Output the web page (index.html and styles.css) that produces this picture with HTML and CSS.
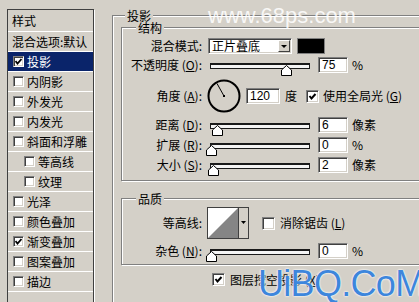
FILE: index.html
```html
<!DOCTYPE html>
<html lang="zh-CN">
<head>
  <meta charset="UTF-8">
  <title>图层样式 - 投影</title>
  <link rel="stylesheet" href="styles.css">
</head>
<body>
  <div class="window">
    <!-- 左侧样式列表 -->
    <div class="styles">
      <div class="styles-head">样式</div>
      <ul class="style-list">
        <li class="plain">混合选项:默认</li>
        <li class="active"><span class="box on"><svg width="7" height="7" viewBox="0 0 7 7"><polyline points="0.5,3 2.5,5.5 6.5,1" /></svg></span>投影</li>
        <li><span class="box"></span>内阴影</li>
        <li><span class="box"></span>外发光</li>
        <li><span class="box"></span>内发光</li>
        <li><span class="box"></span>斜面和浮雕</li>
        <li class="sub"><span class="box"></span>等高线</li>
        <li class="sub"><span class="box"></span>纹理</li>
        <li><span class="box"></span>光泽</li>
        <li><span class="box"></span>颜色叠加</li>
        <li><span class="box on"><svg width="7" height="7" viewBox="0 0 7 7"><polyline points="0.5,3 2.5,5.5 6.5,1" /></svg></span>渐变叠加</li>
        <li><span class="box"></span>图案叠加</li>
        <li><span class="box"></span>描边</li>
      </ul>
    </div>

    <!-- 投影设置 -->
    <fieldset class="group outer">
      <legend>投影</legend>

      <fieldset class="group inner">
        <legend>结构</legend>

        <div class="row r-blend">
          <span class="label">混合模式:</span>
          <div class="select"><span>正片叠底</span><i class="drop"></i></div>
          <span class="swatch"></span>
        </div>

        <div class="row r-opacity">
          <span class="label">不透明度 (<u>O</u>):</span>
          <div class="slider">
            <div class="track"></div>
            <svg class="thumb" style="left: 71px" width="11" height="11" viewBox="0 0 11 11"><polygon points="0.5,10.5 0.5,5 5.5,0.5 10.5,5 10.5,10.5" /></svg>
          </div>
          <span class="num">75</span>
          <span class="unit">%</span>
        </div>

        <div class="row r-angle">
          <span class="label">角度 (<u>A</u>):</span>
          <svg class="dial" width="34" height="34" viewBox="0 0 34 34">
            <circle cx="17" cy="17" r="15.5" />
            <line x1="17" y1="17" x2="10" y2="4.5" />
            <rect x="16" y="16" width="2" height="2" />
          </svg>
          <span class="num wide">120</span>
          <span class="unit u-deg">度</span>
          <span class="box lg on"><svg width="9" height="9" viewBox="0 0 9 9"><polyline points="1.5,4 3.5,6.5 7.5,2" /></svg></span>
          <span class="opt">使用全局光 (<u>G</u>)</span>
        </div>

        <div class="row">
          <span class="label">距离 (<u>D</u>):</span>
          <div class="slider">
            <div class="track"></div>
            <svg class="thumb" style="left: 2px" width="11" height="11" viewBox="0 0 11 11"><polygon points="0.5,10.5 0.5,5 5.5,0.5 10.5,5 10.5,10.5" /></svg>
          </div>
          <span class="num">6</span>
          <span class="unit">像素</span>
        </div>

        <div class="row">
          <span class="label">扩展 (<u>R</u>):</span>
          <div class="slider">
            <div class="track"></div>
            <svg class="thumb" style="left: -4px" width="11" height="11" viewBox="0 0 11 11"><polygon points="0.5,10.5 0.5,5 5.5,0.5 10.5,5 10.5,10.5" /></svg>
          </div>
          <span class="num">0</span>
          <span class="unit">%</span>
        </div>

        <div class="row">
          <span class="label">大小 (<u>S</u>):</span>
          <div class="slider">
            <div class="track"></div>
            <svg class="thumb" style="left: -2px" width="11" height="11" viewBox="0 0 11 11"><polygon points="0.5,10.5 0.5,5 5.5,0.5 10.5,5 10.5,10.5" /></svg>
          </div>
          <span class="num">2</span>
          <span class="unit">像素</span>
        </div>
      </fieldset>

      <fieldset class="group quality">
        <legend>品质</legend>

        <div class="row r-contour">
          <span class="label">等高线:</span>
          <svg class="contour" width="42" height="32" viewBox="0 0 42 32">
            <rect x="0" y="0" width="42" height="32" fill="#d4d0c8" />
            <rect x="1" y="1" width="30" height="30" fill="#fff" />
            <polygon points="1,31 31,1 31,31" fill="#858585" />
            <rect x="0.5" y="0.5" width="41" height="31" fill="none" stroke="#404040" />
            <line x1="31.5" y1="1" x2="31.5" y2="31" stroke="#404040" />
            <polygon points="34,14 39,14 36.5,17" fill="#000" />
          </svg>
          <span class="box lg"></span>
          <span class="opt">消除锯齿 (<u>L</u>)</span>
        </div>

        <div class="row">
          <span class="label">杂色 (<u>N</u>):</span>
          <div class="slider">
            <div class="track"></div>
            <svg class="thumb" style="left: -4px" width="11" height="11" viewBox="0 0 11 11"><polygon points="0.5,10.5 0.5,5 5.5,0.5 10.5,5 10.5,10.5" /></svg>
          </div>
          <span class="num">0</span>
          <span class="unit">%</span>
        </div>
      </fieldset>

      <div class="knockout">
        <span class="box lg on"><svg width="9" height="9" viewBox="0 0 9 9"><polyline points="1.5,4 3.5,6.5 7.5,2" /></svg></span>
        <span class="opt">图层挖空投影 (<u>X</u>)</span>
      </div>
    </fieldset>

    <!-- 水印 -->
    <div class="mark mark-top">www.68ps.com</div>
    <div class="mark mark-bottom">UiBQ.CoM</div>
  </div>
</body>
</html>
```

FILE: styles.css
```css
body {
  margin: 0;
  background: #d4d0c8;
  font-family: "Noto Sans CJK SC", "Liberation Sans", sans-serif;
  font-size: 12px;
  color: #000;
  overflow: hidden;
}
.window {
  position: relative;
  display: flex;
  align-items: flex-start;
  width: 419px;
  height: 302px;
  overflow: hidden;
}

/* 样式列表 */
.styles {
  flex: none;
  margin: 9px 0 0 7px;
  width: 85px;
  height: 310px;
  border: 1px solid #404040;
  box-shadow: 1px 1px 0 #fff;
}
.styles-head {
  height: 21px;
  line-height: 21px;
  padding-left: 4px;
  border-bottom: 1px solid #fff;
}
.style-list {
  list-style: none;
  margin: 0;
  padding: 0;
}
.style-list li {
  display: flex;
  align-items: center;
  height: 19px;
  padding-left: 5px;
  border-bottom: 1px solid #fff;
  white-space: nowrap;
}
.style-list li.plain {
  padding-left: 4px;
}
.style-list li.sub {
  padding-left: 16px;
}
.style-list li.active {
  background: #0a246a;
  color: #fff;
}

/* 复选框 */
.box {
  flex: none;
  display: inline-flex;
  align-items: center;
  justify-content: center;
  box-sizing: border-box;
  width: 11px;
  height: 11px;
  margin-right: 3px;
  background: #fff;
  border: 1px solid;
  border-color: #808080 #fff #fff #808080;
  box-shadow: inset 1px 1px 0 #404040, inset -1px -1px 0 #d4d0c8;
}
.box.lg {
  width: 13px;
  height: 13px;
  margin-right: 0;
}
.box svg {
  fill: none;
  stroke: #000;
  stroke-width: 1.8;
}
.box.lg svg {
  stroke-width: 2;
}

/* 分组框 */
.group {
  margin: 0;
  padding: 0;
  min-width: 0;
  border: 1px solid #808080;
  box-shadow: inset 1px 1px 0 #fff, 1px 1px 0 #fff;
}
.group legend {
  padding: 0 2px;
  line-height: 15px;
  background: #d4d0c8;
}
.outer {
  flex: none;
  margin: 8px 0 0 18px;
  padding-left: 8px;
  width: 332px;
  height: 310px;
}
.outer > legend {
  margin-left: 4px;
}
.inner {
  margin: -3px 8px 0 0;
  padding: 3px 0 7px;
}
.inner > legend,
.quality > legend {
  margin-left: 14px;
}
.quality {
  margin: 10px 8px 0 0;
  padding: 1px 0 5px;
}

/* 行 */
.row {
  display: flex;
  align-items: center;
  height: 16px;
  margin-top: 4px;
  white-space: nowrap;
}
.row.r-blend {
  margin-top: 0;
}
.row.r-opacity {
  margin-top: 3px;
}
.row.r-angle {
  height: 34px;
  margin-top: 6px;
}
.row.r-contour {
  height: 32px;
  margin-top: 0;
}
.label {
  flex: none;
  width: 80px;
  margin-right: 5px;
  text-align: right;
  line-height: 16px;
}

.select {
  display: flex;
  align-items: center;
  box-sizing: border-box;
  width: 84px;
  height: 16px;
  margin-left: 1px;
  padding: 0 1px 0 3px;
  background: #fff;
  border: 1px solid;
  border-color: #808080 #fff #fff #808080;
  box-shadow: inset 1px 1px 0 #404040, inset -1px -1px 0 #d4d0c8;
}
.select span {
  flex: 1;
  line-height: 14px;
}
.drop {
  position: relative;
  box-sizing: border-box;
  width: 12px;
  height: 12px;
  background: #d4d0c8;
  border: 1px solid;
  border-color: #fff #404040 #404040 #fff;
}
.drop::after {
  content: "";
  position: absolute;
  left: 2px;
  top: 4px;
  border-left: 3px solid transparent;
  border-right: 3px solid transparent;
  border-top: 3px solid #000;
}
.swatch {
  box-sizing: border-box;
  width: 28px;
  height: 16px;
  margin-left: 5px;
  background: #000;
  border: 1px solid #808080;
}

.slider {
  position: relative;
  flex: none;
  width: 100px;
  height: 16px;
  margin-left: 3px;
}
.track {
  box-sizing: border-box;
  margin-top: 6px;
  height: 6px;
  background: #f4f4f4;
  border: 1px solid #1a1a1a;
  border-top-width: 2px;
}
.thumb {
  position: absolute;
  top: 8px;
  fill: #fff;
  stroke: #000;
  stroke-width: 1;
}

.num {
  box-sizing: border-box;
  width: 30px;
  height: 16px;
  margin-left: 8px;
  padding-left: 3px;
  font-family: "Liberation Sans", sans-serif;
  line-height: 14px;
  background: #fff;
  border: 1px solid;
  border-color: #808080 #fff #fff #808080;
  box-shadow: inset 1px 1px 0 #404040, inset -1px -1px 0 #d4d0c8;
}
.num.wide {
  width: 34px;
  margin-left: 5px;
}
.unit {
  margin-left: 4px;
  line-height: 16px;
}
.unit.u-deg {
  margin-left: 5px;
  margin-right: 9px;
}
.opt {
  margin-left: 4px;
  line-height: 16px;
}

.dial {
  flex: none;
}
.dial circle {
  fill: none;
  stroke: #000;
  stroke-width: 2;
}
.dial line {
  stroke: #000;
  stroke-width: 1;
}

.contour {
  flex: none;
  margin-right: 13px;
}
.r-contour .opt {
  margin-left: 5px;
}

.knockout {
  display: flex;
  align-items: center;
  height: 13px;
  margin: 8px 0 0 91px;
  white-space: nowrap;
}
.knockout .opt {
  margin-left: 5px;
}

/* 水印 */
.mark {
  position: absolute;
  font-family: "Liberation Sans", sans-serif;
  white-space: nowrap;
  pointer-events: none;
}
.mark-top {
  left: 208px;
  top: 3px;
  font-size: 22px;
  color: rgba(255, 255, 255, 0.85);
}
.mark-bottom {
  left: 258px;
  top: 263px;
  font-size: 36px;
  letter-spacing: -0.7px;
  color: #3d86dc;
  text-shadow: 0 0 2px #fff, 0 0 2px #fff;
}
```
